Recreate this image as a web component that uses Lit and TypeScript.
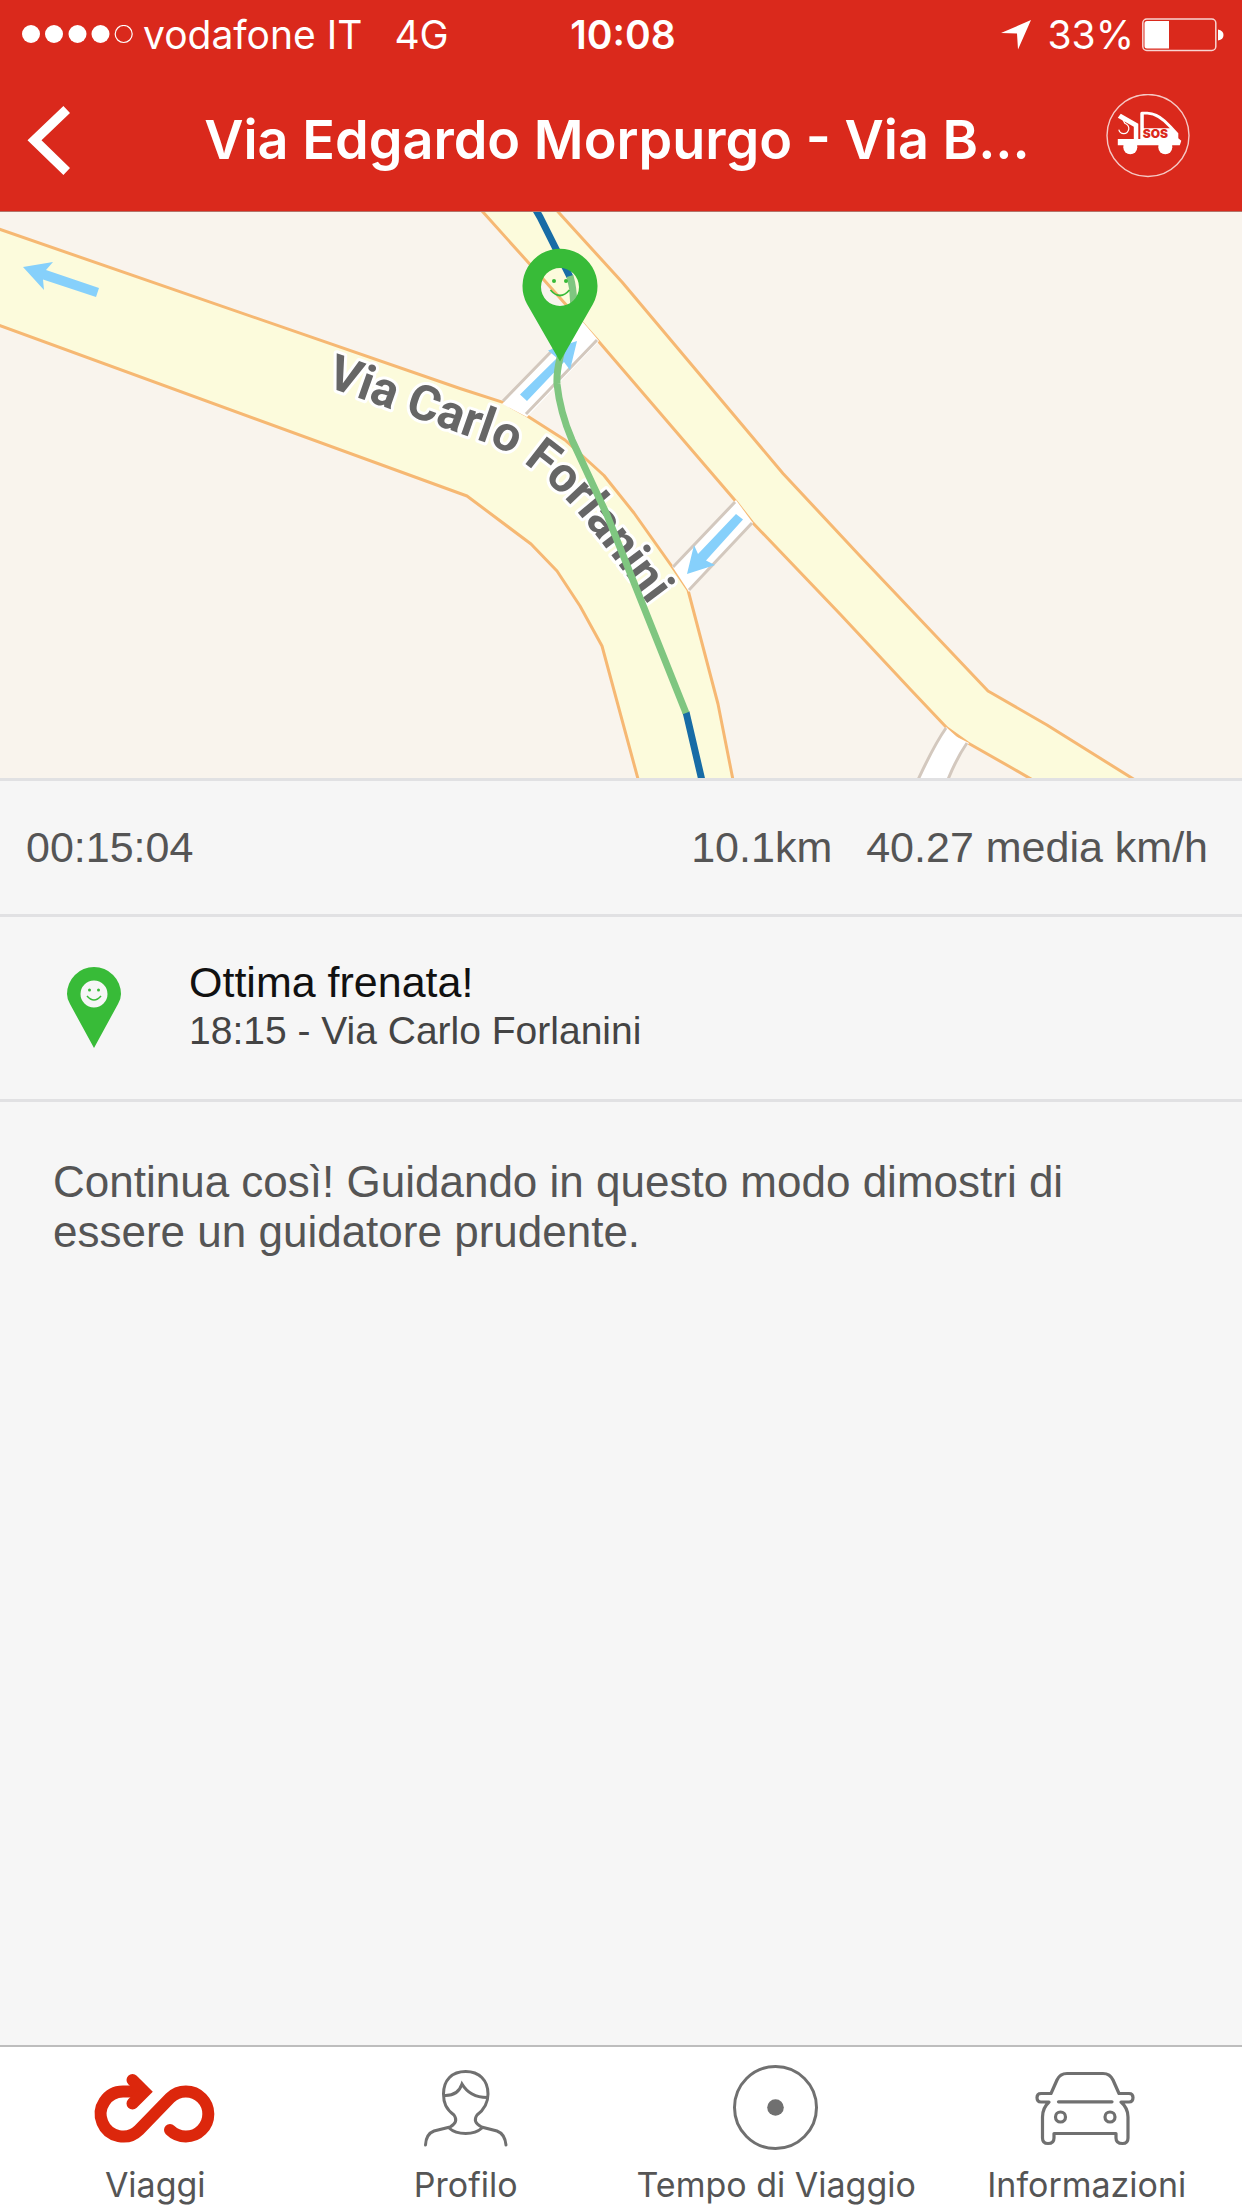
import { LitElement, html, css, svg } from "lit";
import { customElement, property } from "lit/decorators.js";

const smilePin = svg`
  <path fill="#38bb38" fill-rule="evenodd"
    d="M0 74.500 L-33 17 A37.500 37.500 0 1 1 33 17 Z M-19 0 A19 19 0 1 0 19 0 A19 19 0 1 0 -19 0 Z"/>
  <circle cx="-6" cy="-6" r="2" fill="#38bb38"/>
  <circle cx="6" cy="-6" r="2" fill="#38bb38"/>
  <path d="M-9.500 3 Q0 14 9.500 3" fill="none" stroke="#38bb38" stroke-width="1.800"/>`;

@customElement("status-bar")
export class StatusBar extends LitElement {
  static styles = css`
    :host { display: grid; grid-template-columns: 1fr auto 1fr; align-items: center; height: 70px;
      padding: 0 18px 0 22px; color: #fff; font-size: 39px; line-height: 46px; }
    .side { display: flex; align-items: center; }
    .side.end { justify-content: flex-end; }
    .dots { width: 112px; height: 20px; margin-right: 9px; }
    .net { margin-left: 32px; }
    .time { font-weight: 600; }
    .arrow { width: 30px; height: 30px; margin-right: 17px; }
    .battery { width: 82px; height: 34px; margin-left: 8px; }
  `;
  render() {
    return html`
      <div class="side">
        <svg class="dots" viewBox="0 0 112 20" aria-hidden="true">
          <g fill="#fff"><circle cx="9" cy="9" r="9"/><circle cx="32" cy="9" r="9"/><circle cx="55.500" cy="9" r="9"/><circle cx="78.500" cy="9" r="9"/></g>
          <circle cx="101.700" cy="9" r="8.500" fill="none" stroke="#fff" stroke-width="1.200"/>
        </svg>
        <span>vodafone IT</span><span class="net">4G</span>
      </div>
      <span class="time">10:08</span>
      <div class="side end">
        <svg class="arrow" viewBox="0 0 30 30" aria-hidden="true"><path fill="#fff" d="M30 0 L17 29.500 L16 13.500 L0 13 Z"/></svg>
        <span>33%</span>
        <svg class="battery" viewBox="0 0 82 34" aria-hidden="true">
          <rect x="0.800" y="1" width="73" height="31.500" rx="4" fill="none" stroke="#fff" stroke-width="1.500" opacity="0.800"/>
          <path fill="#fff" d="M5 3 H27 V30.500 H5 Q2.500 30.500 2.500 28 V5.500 Q2.500 3 5 3 Z M76 11.500 Q81.500 12.500 81.500 17 Q81.500 21.500 76 22.500 Z"/>
        </svg>
      </div>`;
  }
}

@customElement("title-bar")
export class TitleBar extends LitElement {
  @property() heading = "";
  static styles = css`
    :host { display: grid; grid-template-columns: 116px 1fr 124px; align-items: center; height: 139px;
      padding-bottom: 2px; border-bottom: 1px solid #b3746a; color: #fff; }
    h1 { margin: 0; font-size: 54px; line-height: 64px; font-weight: 600; text-align: center; white-space: nowrap; }
    button { display: flex; padding: 0; border: 0; background: none; }
    .back { padding-left: 26px; }
    .back svg { width: 46px; height: 72px; }
    .sos { justify-content: flex-end; padding: 0 52px 8px 0; }
    .sos svg { width: 84px; height: 84px; flex: none; }
    .sos text { font: 900 12px Inter, sans-serif; fill: #da291c; }
  `;
  render() {
    return html`
      <button class="back" aria-label="Indietro">
        <svg viewBox="26 103 46 72"><path fill="#fff" d="M27.500 139.300 L63.400 105 L70 112 L41.500 139.300 L70 167 L63.400 174 Z"/></svg>
      </button>
      <h1>${this.heading}</h1>
      <button class="sos" aria-label="Soccorso stradale">
        <svg viewBox="1105.700 93.800 84 84">
          <circle cx="1147.700" cy="135.300" r="41" fill="none" stroke="#f6c9c5" stroke-width="1.400"/>
          <g fill="#fff">
            <path d="M1120.500 113.500 L1138 123.500 V139.500 H1133.500 V126.500 L1117.500 117.500 Z"/>
            <path fill-rule="evenodd" d="M1140 138 V113 Q1140 111.500 1141.500 111.500 H1147 Q1157 112 1165 119.500 Q1172 126 1178 133 V138 L1181 140.500 L1179.500 145 H1117.500 V138.700 H1140 Z M1143.500 128 H1169.500 Q1158 115 1147 114.300 H1143.500 Z"/>
            <circle cx="1130" cy="147" r="7"/><circle cx="1165" cy="147" r="7"/>
          </g>
          <path d="M1122.500 119 L1124.500 123 Q1129 125 1128.500 129 Q1127.500 133.500 1123.500 133.500 Q1119.500 133.500 1118.500 129.500" fill="none" stroke="#fff" stroke-width="1.200"/>
          <text x="1142.500" y="138">SOS</text>
        </svg>
      </button>`;
  }
}

@customElement("trip-map")
export class TripMap extends LitElement {
  static styles = css`
    :host { display: block; border-bottom: 3px solid #e1e1e3; background: #f9f4ed; }
    svg { display: block; width: 100%; height: auto; }
    .edge { fill: #fcfbdc; stroke: #f6b873; stroke-width: 3; stroke-linejoin: round; }
    .lane { fill: #fff; }
    .kerb { fill: none; stroke: #d3c8be; stroke-width: 3; }
    .dir { fill: #86d0fb; }
    .track { fill: none; stroke-width: 7; stroke-linejoin: round; }
    .plan { stroke: #176ca6; }
    .event { stroke: #7fc680; }
    .street { font: 700 49px Roboto, sans-serif; fill: #666; stroke: #fff; stroke-width: 6; stroke-linejoin: round; paint-order: stroke; }
  `;
  render() {
    return html`
      <svg viewBox="0 212 1242 566" role="img" aria-label="Mappa del viaggio">
        <path class="edge" d="M-10 226 L460 388.500 L503 402.400 L525 414.600 L565 440 L604 475.500 L634 513 L673 568 L688 590 L718 704 L735 790
          L641 790 L602 646 L580 606 L557 571 L531 544 L467 496 L-10 322 Z"/>
        <path class="edge" d="M465 192 L544 280 L597 339.500 L736 501.500 L752 522 L840 614 L911 690 L947 728 L968 743 L1012 768 L1050 790
          H1151 L1047 725 L988 691 L860 556 L783 473.500 L622 282 L540 192 Z"/>
        <path class="lane" d="M502 404 L527 417 L599 341 L582 321 Z"/>
        <path class="lane" d="M672 566 L689 592 L753 523 L736 500 Z"/>
        <path class="lane" d="M946 727 L935 748 L915 785 L946 785 L957 761 L969 743 L957 737 Z"/>
        <path class="kerb" d="M503 401 L582 320 M526 414 L597 340 M673 567 L735 502 M689 590 L752 523 M946 728 Q934 745 917 782 M967 743 Q956 759 947 782"/>
        <path class="dir" d="M23 267 L53 262 L46 270 L99 288 L96 297 L43 279.500 L44 290 Z"/>
        <path class="dir" d="M577 341 L570 370 L564 362 L527 401 L520 394.500 L557 358 L548 350.500 Z"/>
        <path class="dir" d="M687 574 L694 545 L698 554 L736 514 L743 519.500 L706 560.500 L715 565 Z"/>
        <path id="street-line" fill="none" d="M325 386 L484 442 C515 453 545 477 572 506 C598 536 620 567 672 636"/>
        <text class="street"><textPath href="#street-line">Via Carlo Forlanini</textPath></text>
        <path class="track plan" d="M533 205 L540 217 L555 247 L570 277 M686 712 L703 785"/>
        <path class="track event" d="M570 276 Q578 305 568 332 Q556 364 557 384 Q560 412 572 440 L607 515 L686 713"/>
        <g transform="translate(560 287)">${smilePin}</g>
      </svg>`;
  }
}

@customElement("trip-details")
export class TripDetails extends LitElement {
  static styles = css`
    :host { display: block; flex: 1; font-family: "Liberation Sans", Arial, sans-serif; }
    .stats { display: flex; align-items: center; gap: 34px; height: 131px; padding: 0 34px 2px 26px;
      border-bottom: 3px solid #e1e1e3; color: #555; font-size: 43px; line-height: 50px; }
    .duration { margin-right: auto; }
    .event { display: flex; align-items: center; height: 182px; padding-left: 66px; border-bottom: 3px solid #e1e1e3; }
    .event svg { width: 56px; height: 84px; margin-right: 67px; }
    .text { padding-bottom: 4px; }
    h2, p { margin: 0; font-weight: 400; }
    h2 { font-size: 43px; line-height: 50px; color: #111; }
    .place { font-size: 39px; line-height: 48px; color: #444; }
    .advice { padding: 55px 53px; font-size: 44px; line-height: 50px; color: #555; }
  `;
  render() {
    return html`
      <div class="stats"><span class="duration">00:15:04</span><span>10.1km</span><span>40.27 media km/h</span></div>
      <section class="event">
        <svg viewBox="-28 -42 56 84" aria-hidden="true">
          <path fill="#38bb38" fill-rule="evenodd" d="M0 40 L-24 -4 Q-27 -9 -27 -14 A27 27 0 0 1 27 -14 Q27 -9 24 -4 Z M-13.500 -14 A13.500 13.500 0 1 0 13.500 -14 A13.500 13.500 0 1 0 -13.500 -14 Z"/>
          <circle cx="-4.500" cy="-18" r="1.500" fill="#38bb38"/><circle cx="4.500" cy="-18" r="1.500" fill="#38bb38"/>
          <path d="M-7 -12 Q0 -4 7 -12" fill="none" stroke="#38bb38" stroke-width="1.600"/>
        </svg>
        <div class="text"><h2>Ottima frenata!</h2><p class="place">18:15 - Via Carlo Forlanini</p></div>
      </section>
      <p class="advice">Continua così! Guidando in questo modo dimostri di essere un guidatore prudente.</p>`;
  }
}

const tabs = [
  { label: "Viaggi", icon: svg`<g transform="translate(-90 -2060)" fill="none" stroke="#dc270c" stroke-width="12">
      <path stroke-linecap="round" d="M170 2130 A22.500 22.500 0 1 0 170 2098 L139 2130 A22.500 22.500 0 1 1 123 2091.500 H142"/>
      <path stroke-linecap="round" d="M132.500 2080 L144.300 2091.800 L132.500 2103.600"/></g>` },
  { label: "Profilo", icon: svg`<g transform="translate(-401 -2060)" fill="none" stroke="#707070" stroke-width="3" stroke-linecap="round">
      <path d="M425.500 2145 Q426 2134 434 2131 L450 2127 Q459 2122 454 2115 C446 2109 443.500 2103 443.500 2094 C443.500 2080 452 2071.500 465.700 2071.500 C479 2071.500 488 2080 488 2094 C488 2103 485 2109 477 2115 Q472 2122 481.500 2127 L497 2131 Q505 2134 506 2145"/>
      <path d="M449 2128 Q455 2133.500 465.700 2133.500 Q476 2133.500 482 2128"/>
      <path d="M444.500 2095.500 Q458 2096 462 2084 Q470 2097.500 487 2097.500"/></g>` },
  { label: "Tempo di Viaggio", icon: svg`<circle cx="64.500" cy="47.500" r="41" fill="none" stroke="#707070" stroke-width="3"/><circle cx="64.500" cy="47.500" r="8.300" fill="#707070"/>` },
  { label: "Informazioni", icon: svg`<g transform="translate(-1022 -2060)" fill="none" stroke="#707070" stroke-width="3.200" stroke-linecap="round" stroke-linejoin="round">
      <path d="M1049 2102 H1041 Q1037 2102 1037 2097.500 Q1037 2093.500 1041 2093.500 H1051 L1057 2080 Q1060 2073.500 1067 2073.500 H1103 Q1110 2073.500 1113 2080 L1119 2093.500 H1129 Q1133 2093.500 1133 2097.500 Q1133 2102 1129 2102 H1121 Q1128 2108 1128 2117 V2138 Q1128 2143.500 1122.500 2143.500 Q1116 2143.500 1116 2138 V2133.500 H1054 V2138 Q1054 2143.500 1048 2143.500 Q1042.500 2143.500 1042.500 2138 V2117 Q1042.500 2108 1049 2102 Z"/>
      <path d="M1058.500 2101.800 H1112"/><circle cx="1060.500" cy="2117" r="5"/><circle cx="1110" cy="2117" r="5"/></g>` },
];

@customElement("tab-bar")
export class TabBar extends LitElement {
  static styles = css`
    nav { display: grid; grid-template-columns: repeat(4, 1fr); height: 161px; border-top: 2px solid #bdbdbd; background: #fff; }
    a { display: flex; flex-direction: column; align-items: center; padding-top: 13px; color: #555; font-size: 34px; line-height: 40px;
      text-decoration: none; white-space: nowrap; }
    svg { width: 130px; height: 95px; margin-bottom: 10px; }
  `;
  render() {
    return html`<nav>${tabs.map((t, i) => html`
      <a href="#" aria-current=${i === 0 ? "page" : "false"}><svg viewBox="0 0 130 95" aria-hidden="true">${t.icon}</svg><span>${t.label}</span></a>`)}</nav>`;
  }
}

@customElement("app-root")
export class AppRoot extends LitElement {
  static styles = css`
    :host { display: flex; flex-direction: column; min-height: 100vh; background: #f6f6f6; font-family: Inter, "Liberation Sans", sans-serif; }
    header { background: #da291c; }
    main { display: flex; flex-direction: column; flex: 1; }
  `;
  render() {
    return html`
      <header><status-bar></status-bar><title-bar heading="Via Edgardo Morpurgo - Via B..."></title-bar></header>
      <main><trip-map></trip-map><trip-details></trip-details></main>
      <tab-bar></tab-bar>`;
  }
}
